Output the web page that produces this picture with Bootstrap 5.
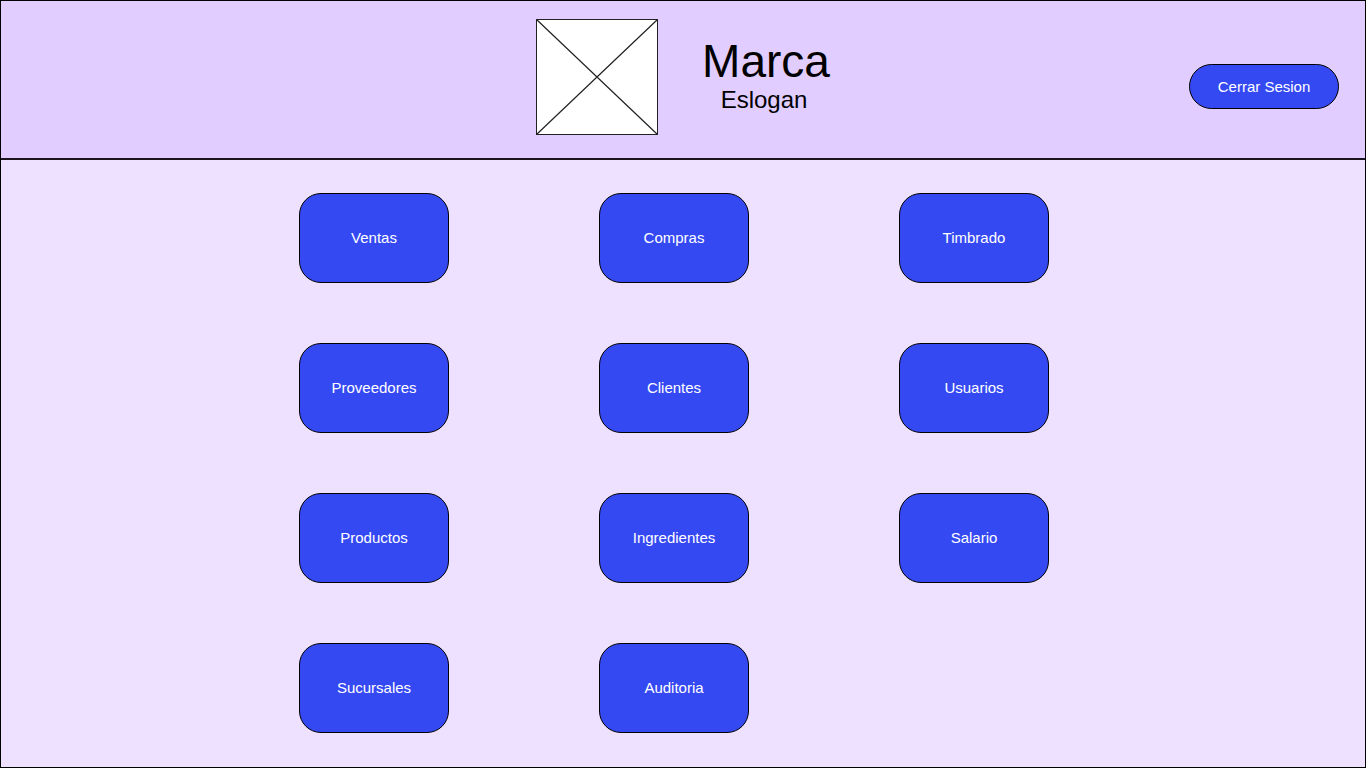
<!DOCTYPE html>
<html lang="es">
<head>
<meta charset="utf-8">
<meta name="viewport" content="width=device-width, initial-scale=1">
<title>Marca - Menú principal</title>
<link href="https://cdn.jsdelivr.net/npm/bootstrap@5.3.0/dist/css/bootstrap.min.css" rel="stylesheet">
<style>
  body { font-family: "Liberation Sans", Arial, sans-serif; color: #000; background: #eee0ff; }
  .page-frame { border: 1px solid #000; }
  .top-bar {
    display: grid;
    grid-template-columns: 1fr auto 1fr;
    padding: 18px 26px 23px;
    background: #e1cdff;
    border-bottom: 2px solid #1a141f;
  }
  .brand-group { grid-column: 2; gap: 44px; }
  .brand-logo { width: 122px; height: 116px; }
  .brand-name { font-size: 46px; line-height: 46px; font-weight: 400; }
  .brand-slogan { font-size: 24px; line-height: 32px; }
  .btn-app {
    --bs-btn-color: #fff;
    --bs-btn-bg: #3549f3;
    --bs-btn-border-color: #000;
    --bs-btn-hover-color: #fff;
    --bs-btn-hover-bg: #2339d8;
    --bs-btn-hover-border-color: #000;
    --bs-btn-active-color: #fff;
    --bs-btn-active-bg: #1c2fbd;
    --bs-btn-active-border-color: #000;
    --bs-btn-font-size: 15px;
    --bs-btn-line-height: 18px;
    width: 150px;
  }
  .btn-logout { height: 45px; margin-top: 19px; }
  .btn-tile { --bs-btn-border-radius: 22px; height: 90px; }
  .menu-area { padding: 33px 18px 34px 0; }
  .menu-grid {
    grid-template-columns: repeat(3, 150px);
    justify-content: space-between;
    row-gap: 60px;
    max-width: 750px;
  }
</style>
</head>
<body>
<div class="page-frame min-vh-100 d-flex flex-column">
  <header class="top-bar align-items-center">
    <div class="brand-group d-flex align-items-center">
      <svg class="brand-logo" viewBox="0 0 122 116" role="img" aria-label="Logo">
        <rect x="0.5" y="0.5" width="121" height="115" fill="#fff" stroke="#222"/>
        <path d="M0.5 0.5 L121.5 115.5 M121.5 0.5 L0.5 115.5" fill="none" stroke="#222" stroke-width="1.2"/>
      </svg>
      <div class="text-center">
        <h1 class="brand-name m-0">Marca</h1>
        <p class="brand-slogan m-0 pe-1">Eslogan</p>
      </div>
    </div>
    <button type="button" class="btn btn-app btn-logout rounded-pill ms-auto">Cerrar Sesion</button>
  </header>
  <main class="menu-area flex-grow-1">
    <nav class="menu-grid d-grid mx-auto" aria-label="Menú principal">
      <button type="button" class="btn btn-app btn-tile">Ventas</button>
      <button type="button" class="btn btn-app btn-tile">Compras</button>
      <button type="button" class="btn btn-app btn-tile">Timbrado</button>
      <button type="button" class="btn btn-app btn-tile">Proveedores</button>
      <button type="button" class="btn btn-app btn-tile">Clientes</button>
      <button type="button" class="btn btn-app btn-tile">Usuarios</button>
      <button type="button" class="btn btn-app btn-tile">Productos</button>
      <button type="button" class="btn btn-app btn-tile">Ingredientes</button>
      <button type="button" class="btn btn-app btn-tile">Salario</button>
      <button type="button" class="btn btn-app btn-tile">Sucursales</button>
      <button type="button" class="btn btn-app btn-tile">Auditoria</button>
    </nav>
  </main>
</div>
<script src="https://cdn.jsdelivr.net/npm/bootstrap@5.3.0/dist/js/bootstrap.bundle.min.js"></script>
</body>
</html>
